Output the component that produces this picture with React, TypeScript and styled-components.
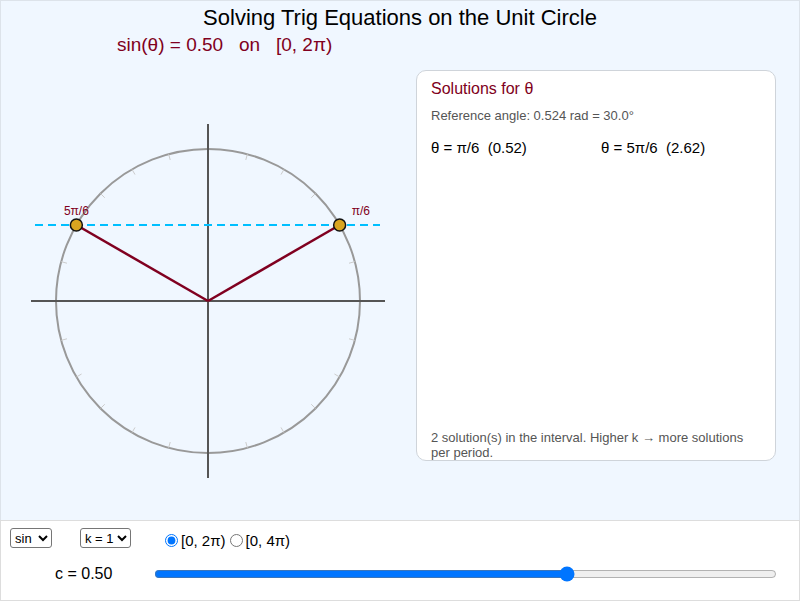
import styled, { createGlobalStyle } from 'styled-components';

const R = 152;
const CX = 208;
const CY = 231;
const AXIS = 177;
const C = 0.5;

const GlobalStyle = createGlobalStyle`
  html, body {
    margin: 0;
    padding: 0;
    background: #ffffff;
    font-family: "Liberation Sans", Arial, sans-serif;
  }
`;

const ticks = Array.from({ length: 24 }, (_, i) => (i * Math.PI) / 12);
const solutions = [Math.asin(C), Math.PI - Math.asin(C)];

const UnitCircle = () => {
  const pts = solutions.map((a) => ({
    x: CX + R * Math.cos(a),
    y: CY - R * Math.sin(a),
  }));
  return (
    <Diagram width={410} height={440} viewBox="0 0 410 440">
      <circle cx={CX} cy={CY} r={R} fill="none" stroke="#999" strokeWidth={2} />
      {ticks.map((a, i) => (
        <line
          key={i}
          x1={CX + R * Math.cos(a)}
          y1={CY - R * Math.sin(a)}
          x2={CX + (R - 6) * Math.cos(a)}
          y2={CY - (R - 6) * Math.sin(a)}
          stroke="#ccc"
          strokeWidth={1}
        />
      ))}
      <line x1={CX - AXIS} y1={CY} x2={CX + AXIS} y2={CY} stroke="#555" strokeWidth={2} />
      <line x1={CX} y1={CY - AXIS} x2={CX} y2={CY + AXIS} stroke="#555" strokeWidth={2} />
      <line
        x1={35}
        y1={CY - R * C}
        x2={380}
        y2={CY - R * C}
        stroke="#00bfff"
        strokeWidth={2}
        strokeDasharray="8 5"
      />
      {pts.map((p, i) => (
        <line key={i} x1={CX} y1={CY} x2={p.x} y2={p.y} stroke="#800020" strokeWidth={2.5} />
      ))}
      {pts.map((p, i) => (
        <circle key={i} cx={p.x} cy={p.y} r={6} fill="#daa520" stroke="#111" strokeWidth={1.5} />
      ))}
      <PointLabel x={pts[0].x + 12} y={pts[0].y - 10}>π/6</PointLabel>
      <PointLabel x={pts[1].x} y={pts[1].y - 10} textAnchor="middle">
        5π/6
      </PointLabel>
    </Diagram>
  );
};

const App = () => {
  return (
    <>
      <GlobalStyle />
      <Stage>
        <Title>Solving Trig Equations on the Unit Circle</Title>
        <Equation>sin(θ) = 0.50&nbsp;&nbsp; on &nbsp;&nbsp;[0, 2π)</Equation>
        <Main>
          <UnitCircle />
          <Panel>
            <PanelTitle>Solutions for θ</PanelTitle>
            <Note>Reference angle: 0.524 rad = 30.0°</Note>
            <SolutionGrid>
              <Solution>θ = π/6&nbsp; (0.52)</Solution>
              <Solution>θ = 5π/6&nbsp; (2.62)</Solution>
            </SolutionGrid>
            <Footnote>2 solution(s) in the interval. Higher k → more solutions per period.</Footnote>
          </Panel>
        </Main>
      </Stage>
      <Controls>
        <ControlRow>
          <Select defaultValue="sin" $width={42} $gap={28}>
            <option value="sin">sin</option>
            <option value="cos">cos</option>
            <option value="tan">tan</option>
          </Select>
          <Select defaultValue="1" $width={51} $gap={34}>
            <option value="1">k = 1</option>
            <option value="2">k = 2</option>
            <option value="3">k = 3</option>
          </Select>
          <RadioLabel>
            <input type="radio" name="range" defaultChecked />
            [0, 2π)
          </RadioLabel>
          <RadioLabel>
            <input type="radio" name="range" />
            [0, 4π)
          </RadioLabel>
        </ControlRow>
        <SliderRow>
          <ValueLabel>c = 0.50</ValueLabel>
          <Slider type="range" min={-1.5} max={1.5} step={0.01} defaultValue={C} />
        </SliderRow>
      </Controls>
    </>
  );
};

const Stage = styled.div`
  box-sizing: border-box;
  height: 520px;
  background: #f0f7ff;
  border: 1px solid #dde3ea;
  border-bottom: none;
  display: flex;
  flex-direction: column;
`;

const Title = styled.h1`
  margin: 4px 0 0;
  text-align: center;
  font-size: 22px;
  font-weight: 400;
  line-height: 26px;
  color: #000;
`;

const Equation = styled.div`
  margin: 3px 0 0 116px;
  font-size: 19px;
  line-height: 22px;
  color: #800020;
`;

const Main = styled.div`
  display: flex;
  align-items: flex-start;
  margin-top: 14px;
  margin-left: -1px;
`;

const Diagram = styled.svg`
  display: block;
  flex: 0 0 auto;
  margin-right: 6px;
`;

const PointLabel = styled.text`
  font-family: "Liberation Sans", Arial, sans-serif;
  font-size: 12px;
  fill: #800020;
`;

const Panel = styled.div`
  box-sizing: border-box;
  width: 360px;
  height: 391px;
  background: #ffffff;
  border: 1px solid #cfd4da;
  border-radius: 10px;
  padding: 8px 14px 0;
  display: flex;
  flex-direction: column;
`;

const PanelTitle = styled.div`
  font-size: 16px;
  line-height: 20px;
  color: #800020;
`;

const Note = styled.div`
  margin-top: 9px;
  font-size: 13px;
  line-height: 16px;
  color: #555;
`;

const SolutionGrid = styled.div`
  display: grid;
  grid-template-columns: 170px 1fr;
  margin-top: 15px;
`;

const Solution = styled.div`
  font-size: 15px;
  line-height: 18px;
  color: #000;
`;

const Footnote = styled.div`
  margin-top: auto;
  font-size: 13px;
  line-height: 15px;
  color: #555;
`;

const Controls = styled.div`
  box-sizing: border-box;
  height: 81px;
  background: #ffffff;
  border: 1px solid #ddd;
  padding: 6px 9px 0;
  display: flex;
  flex-direction: column;
`;

const ControlRow = styled.div`
  display: flex;
  align-items: center;
  height: 22px;
`;

const Select = styled.select<{ $width: number; $gap: number }>`
  box-sizing: border-box;
  width: ${(p) => p.$width}px;
  margin: 0 ${(p) => p.$gap}px 0 0;
  font-family: "Liberation Sans", Arial, sans-serif;
  font-size: 13px;
  height: 20px;
  padding: 0;
  border: 1px solid #767676;
  border-radius: 3px;
  background: #fff;
  color: #000;
`;

const RadioLabel = styled.label`
  display: inline-flex;
  align-items: center;
  font-size: 15px;
  color: #000;
  margin: 4px 4px 0 0;

  input {
    margin: 0 3px 0 0;
    width: 13px;
    height: 13px;
  }
`;

const SliderRow = styled.div`
  display: flex;
  align-items: center;
  margin-top: 13px;
  height: 24px;
`;

const ValueLabel = styled.span`
  box-sizing: border-box;
  width: 144px;
  padding-left: 45px;
  font-size: 16px;
  color: #000;
`;

const Slider = styled.input`
  flex: 1;
  margin: 0 13px 0 0;
`;

export default App;
